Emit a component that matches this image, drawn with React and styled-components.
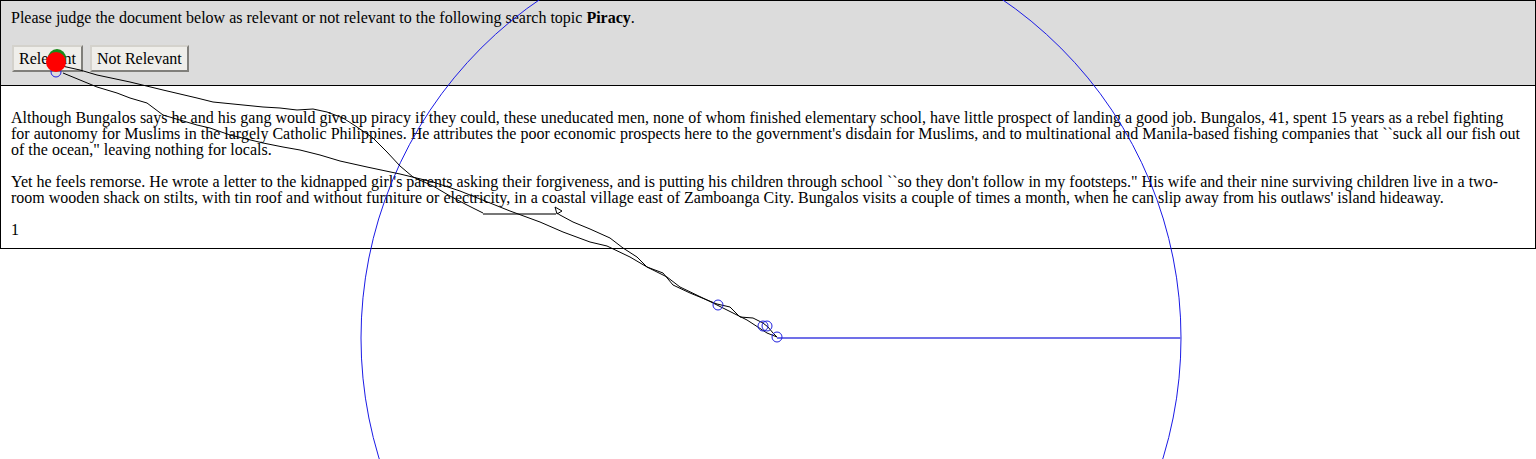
import React from "react";
import styled, { createGlobalStyle } from "styled-components";

const GlobalStyle = createGlobalStyle`
  html, body {
    margin: 0;
    padding: 0;
    background: #ffffff;
    overflow: hidden;
  }
  body {
    font-family: "Liberation Serif", "Times New Roman", serif;
    font-size: 16px;
    color: #000000;
  }
`;

const pathA = [
  [62, 66], [80, 70], [97, 75], [130, 82], [163, 90], [197, 98], [213, 102],
  [263, 107], [280, 108], [297, 110], [313, 109], [327, 112], [343, 118],
  [357, 127], [373, 138], [387, 152], [400, 166], [413, 177], [433, 186],
  [450, 196], [467, 205], [483, 213],
];

const pathA2 = [
  [557, 213], [560, 215], [573, 222], [590, 229], [610, 238], [623, 248],
  [637, 257], [647, 267], [663, 273], [673, 285], [690, 293], [707, 300],
  [717, 304], [730, 307], [740, 317], [753, 318], [763, 323], [768, 327],
  [773, 333], [777, 337],
];

const pathB = [
  [63, 73], [80, 80], [97, 87], [117, 93], [130, 98], [147, 103], [163, 115],
  [173, 118], [197, 125], [210, 128], [230, 135], [263, 143], [283, 147],
  [300, 150], [320, 155], [340, 161], [367, 167], [400, 174], [433, 182],
  [460, 191], [485, 201], [510, 211], [540, 222], [563, 232], [590, 242],
  [607, 246], [630, 257], [647, 267], [667, 277], [680, 287], [707, 300],
  [727, 310], [747, 320], [767, 333], [777, 337],
];

const toPoints = (pts) => pts.map((p) => p.join(",")).join(" ");

const Stage = styled.div`
  position: relative;
  width: 1536px;
  height: 459px;
  overflow: hidden;
`;

const Frame = styled.div`
  border: 1px solid #000000;
`;

const Header = styled.div`
  background: #dcdcdc;
  border-bottom: 1px solid #000000;
  padding: 9px 10px 13px 10px;
`;

const Prompt = styled.div`
  line-height: 16px;
  margin-bottom: 19px;
`;

const Buttons = styled.div`
  display: flex;
  gap: 7px;
  margin-left: 1px;
`;

const JudgeButton = styled.button`
  font-family: "Liberation Serif", "Times New Roman", serif;
  font-size: 16px;
  height: 27px;
  padding: 0 5px;
  background: #efeeea;
  border: 2px outset #d4d2cc;
  color: #000000;
  line-height: 16px;
`;

const Doc = styled.div`
  background: #ffffff;
  padding: 24px 10px 10px 10px;
`;

const Para = styled.p`
  margin: 0 0 16px 0;
  line-height: 16px;
`;

const PageNo = styled.div`
  line-height: 16px;
`;

const Overlay = styled.svg`
  position: absolute;
  top: 0;
  left: 0;
  pointer-events: none;
`;

export default function App() {
  return (
    <Stage>
      <GlobalStyle />
      <Frame>
        <Header>
          <Prompt>
            Please judge the document below as relevant or not relevant to the following search topic <b>Piracy</b>.
          </Prompt>
          <Buttons>
            <JudgeButton>Relevant</JudgeButton>
            <JudgeButton>Not Relevant</JudgeButton>
          </Buttons>
        </Header>
        <Doc>
          <Para>
            Although Bungalos says he and his gang would give up piracy if they could, these uneducated men, none of whom finished elementary school, have little prospect of landing a good job. Bungalos, 41, spent 15 years as a rebel fighting for autonomy for Muslims in the largely Catholic Philippines. He attributes the poor economic prospects here to the government's disdain for Muslims, and to multinational and Manila-based fishing companies that ``suck all our fish out of the ocean," leaving nothing for locals.
          </Para>
          <Para>
            Yet he feels remorse. He wrote a letter to the kidnapped girl's parents asking their forgiveness, and is putting his children through school ``so they don't follow in my footsteps." His wife and their nine surviving children live in a two-room wooden shack on stilts, with tin roof and without furniture or electricity, in a coastal village east of Zamboanga City. Bungalos visits a couple of times a month, when he can slip away from his outlaws' island hideaway.
          </Para>
          <PageNo>1</PageNo>
        </Doc>
      </Frame>
      <Overlay width="1536" height="459" viewBox="0 0 1536 459">
        <circle cx="771" cy="338" r="410" fill="none" stroke="#1a1ae6" strokeWidth="1" />
        <line x1="777" y1="338" x2="1181" y2="338" stroke="#7070e8" strokeWidth="2" />
        <polyline points={toPoints(pathA)} fill="none" stroke="#000" strokeWidth="1" />
        <line x1="483" y1="214" x2="556" y2="214" stroke="#777" strokeWidth="2" />
        <polygon points="555,207 562,211 557,214" fill="#fff" stroke="#000" strokeWidth="1" />
        <polyline points={toPoints(pathA2)} fill="none" stroke="#000" strokeWidth="1" />
        <polyline points={toPoints(pathB)} fill="none" stroke="#000" strokeWidth="1" />
        <circle cx="718" cy="305" r="5" fill="none" stroke="#2222dd" strokeWidth="1" />
        <circle cx="763" cy="326" r="5" fill="none" stroke="#2222dd" strokeWidth="1" />
        <circle cx="767" cy="326" r="5" fill="none" stroke="#2222dd" strokeWidth="1" />
        <circle cx="777" cy="337" r="5" fill="none" stroke="#2222dd" strokeWidth="1" />
        <circle cx="56" cy="72" r="5" fill="none" stroke="#2222dd" strokeWidth="1" />
        <circle cx="57" cy="58" r="9" fill="#1a8a1a" />
        <circle cx="56" cy="62" r="10" fill="#ff0000" />
      </Overlay>
    </Stage>
  );
}
